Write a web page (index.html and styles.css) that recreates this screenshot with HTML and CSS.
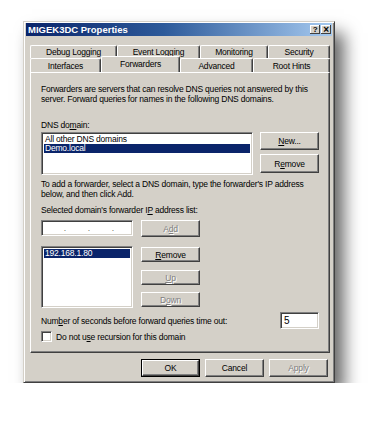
FILE: index.html
```html
<!DOCTYPE html>
<html lang="en">
<head>
  <meta charset="UTF-8">
  <title>MIGEK3DC Properties</title>
  <link rel="stylesheet" href="styles.css">
</head>
<body>
  <div class="dialog">
    <div class="titlebar">
      <span class="title">MIGEK3DC Properties</span>
      <span class="caption-btns">
        <span class="cap-btn">?</span>
        <span class="cap-btn close">&#215;</span>
      </span>
    </div>

    <!-- tab strip, two rows -->
    <div class="tabs">
      <div class="tab-row back">
        <div class="tab w87">Debug Logging</div>
        <div class="tab w83">Event Logging</div>
        <div class="tab w68">Monitoring</div>
        <div class="tab w62">Security</div>
      </div>
      <div class="tab-row front">
        <div class="tab w71">Interfaces</div>
        <div class="tab w79 active">Forwarders</div>
        <div class="tab w73">Advanced</div>
        <div class="tab w77">Root Hints</div>
      </div>
    </div>

    <div class="panel">
      <p class="text">Forwarders are servers that can resolve DNS queries not answered by this server. Forward queries for names in the following DNS domains.</p>

      <div class="text label-dns">DNS do<u>m</u>ain:</div>
      <div class="row domain-row">
        <div class="listbox domains">
          <div class="item">All other DNS domains</div>
          <div class="item selected">Demo.local</div>
        </div>
        <div class="btn-col">
          <button class="btn new"><u>N</u>ew...</button>
          <button class="btn remove1">R<u>e</u>move</button>
        </div>
      </div>

      <p class="text hint">To add a forwarder, select a DNS domain, type the forwarder's IP address below, and then click Add.</p>

      <div class="text label-ip">Selected domain's forwarder I<u>P</u> address list:</div>
      <div class="row ip-row">
        <div class="ipbox"><span></span><span>.</span><span>.</span><span>.</span></div>
        <button class="btn disabled add">A<u>d</u>d</button>
      </div>

      <div class="row ip-list-row">
        <div class="listbox ips">
          <div class="item selected">192.168.1.80</div>
        </div>
        <div class="btn-col small">
          <button class="btn"><u>R</u>emove</button>
          <button class="btn disabled up"><u>U</u>p</button>
          <button class="btn disabled down">D<u>o</u>wn</button>
        </div>
      </div>

      <div class="row timeout-row">
        <span class="text">Num<u>b</u>er of seconds before forward queries time out:</span>
        <div class="numbox">5</div>
      </div>

      <label class="row check-row">
        <span class="checkbox"></span>
        <span class="text">Do not u<u>s</u>e recursion for this domain</span>
      </label>
    </div>

    <div class="footer">
      <button class="btn default">OK</button>
      <button class="btn">Cancel</button>
      <button class="btn disabled">Apply</button>
    </div>
  </div>
</body>
</html>
```

FILE: styles.css
```css
body {
  margin: 0;
  background: #fff;
  font-family: "Liberation Sans", Arial, sans-serif;
  font-size: 8.5px;
  letter-spacing: -0.2px;
  color: #000;
}

.dialog {
  margin: 21px 0 0 23px;
  width: 312px;
  height: 362px;
  box-sizing: border-box;
  padding: 1px 2px 2px 2px;
  background: #d4d0c8;
  border: 1px solid;
  border-color: #d4d0c8 #404040 #404040 #d4d0c8;
  box-shadow: inset 1px 1px #fff, inset -1px -1px #808080, 9px 12px 16px rgba(0,0,0,.6);
  display: flex;
  flex-direction: column;
}

/* title bar */
.titlebar {
  height: 13px;
  display: flex;
  align-items: center;
  justify-content: space-between;
  padding: 0 1px 0 2px;
  background: linear-gradient(90deg, #0a246a 0%, #2d5a9a 45%, #a6caf0 100%);
}
.title { color: #fff; font-weight: bold; font-size: 9.5px; letter-spacing: 0; }
.caption-btns { display: flex; gap: 1px; }
.cap-btn {
  width: 10px; height: 9px;
  background: #d4d0c8;
  box-shadow: inset -1px -1px #404040, inset 1px 1px #fff;
  font-weight: bold; font-size: 8px; line-height: 9px;
  text-align: center;
}
.cap-btn.close { font-size: 10px; }

/* tabs */
.tabs { margin: 9px 2px 0 4px; }
.tab-row { display: flex; }
.tab-row.back { height: 13px; }
.tab-row.front { height: 14px; }
.tab {
  box-sizing: border-box;
  height: 100%;
  padding-top: 1px;
  line-height: 10px;
  text-align: center;
  border-left: 1px solid #fff;
  border-top: 1px solid #fff;
  border-right: 1px solid #404040;
  box-shadow: inset -1px 0 #808080;
  border-radius: 2px 2px 0 0;
}
.tab-row.front .tab { padding-top: 2px; }
.tab.active {
  position: relative;
  height: 16px;
  margin-top: -2px;
  margin-bottom: -1px;
  background: #d4d0c8;
  z-index: 1;
  padding-top: 2px;
}
.w87 { width: 87px; } .w83 { width: 83px; } .w68 { width: 68px; } .w62 { width: 62px; }
.w71 { width: 71px; } .w79 { width: 79px; } .w73 { width: 73px; } .w77 { width: 77px; }

/* page panel */
.panel {
  margin: 0 2px 0 4px;
  height: 281px;
  box-sizing: border-box;
  padding: 11px 10px 0 10px;
  border-left: 1px solid #fff;
  border-top: 1px solid #fff;
  border-right: 1px solid #404040;
  border-bottom: 1px solid #404040;
  box-shadow: inset -1px -1px #808080;
}
.text { margin: 0; line-height: 10px; }
.row { display: flex; }

.label-dns { margin-top: 16px; }
.domain-row { margin-top: 2px; gap: 7px; }
.listbox {
  box-sizing: border-box;
  background: #fff;
  border: 1px solid;
  border-color: #808080 #fff #fff #808080;
  box-shadow: inset 1px 1px #404040, inset -1px -1px #d4d0c8;
  padding: 2px;
}
.domains { width: 212px; height: 43px; }
.ips { width: 92px; height: 62px; }
.item { line-height: 9px; height: 9px; padding-left: 1px; white-space: nowrap; }
.item.selected { background: #0a246a; color: #fff; }

.btn-col { display: flex; flex-direction: column; gap: 4px; }
.btn {
  box-sizing: border-box;
  width: 59px;
  height: 18px;
  padding: 0;
  font: inherit;
  letter-spacing: inherit;
  color: #000;
  background: #d4d0c8;
  border: 1px solid;
  border-color: #fff #404040 #404040 #fff;
  box-shadow: inset -1px -1px #808080;
}
.remove1 { height: 19px; }
.btn.disabled { color: #808080; text-shadow: 1px 1px #fff; }
.btn.default { outline: 1px solid #000; outline-offset: -1px; border-width: 2px; border-color: #fff #404040 #404040 #fff; }

.hint { margin-top: 4px; }
.label-ip { margin-top: 6px; }
.ip-row { margin-top: 5px; gap: 8px; align-items: flex-start; }
.ipbox {
  box-sizing: border-box;
  width: 92px; height: 16px;
  display: flex;
  align-items: center;
  background: #fff;
  border: 1px solid;
  border-color: #808080 #fff #fff #808080;
  box-shadow: inset 1px 1px #404040, inset -1px -1px #d4d0c8;
  color: #666;
}
.ipbox span { width: 24px; text-align: right; line-height: 10px; }
.ipbox span:first-child { width: 0; }
.add { height: 17px; }

.ip-list-row { margin-top: 9px; gap: 8px; }
.btn-col.small { padding-top: 1px; gap: 8px; }
.btn-col.small .btn { height: 15px; }
.btn-col.small .down { margin-top: -1px; }

.timeout-row { margin-top: 4px; align-items: center; }
.numbox {
  margin-left: auto;
  box-sizing: border-box;
  width: 39px; height: 17px;
  padding: 2px 3px;
  background: #fff;
  border: 1px solid;
  border-color: #808080 #fff #fff #808080;
  box-shadow: inset 1px 1px #404040, inset -1px -1px #d4d0c8;
  line-height: 11px;
  font-size: 10px;
}
.check-row { margin-top: 2px; align-items: center; gap: 4px; }
.checkbox {
  box-sizing: border-box;
  width: 11px; height: 11px;
  background: #fff;
  border: 1px solid;
  border-color: #808080 #fff #fff #808080;
  box-shadow: inset 1px 1px #404040, inset -1px -1px #d4d0c8;
}

.footer {
  display: flex;
  justify-content: flex-end;
  gap: 5px;
  margin: 6px 4px 0 0;
}
```
